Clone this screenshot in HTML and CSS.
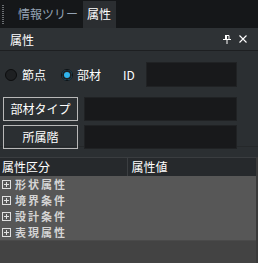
FILE: index.html
```html
<!DOCTYPE html>
<html lang="ja">
<head>
<meta charset="UTF-8">
<title>属性</title>
<link rel="stylesheet" href="styles.css">
</head>
<body>

<div class="tabs">
<div class="grip"></div>
<div class="tab">情報ツリー</div>
<div class="tab active">属性</div>
</div>

<div class="panel-head">
<span class="title">属性</span>
<span class="tools">
<svg width="8" height="9" viewBox="0 0 8 9"><path d="M2 0.5h4v4M2.5 0.5v4M0 4.5h8M4 5v4" stroke="#fff" stroke-width="1" fill="none"/><rect x="2" y="0" width="2" height="5" fill="#fff"/></svg>
<svg width="8" height="8" viewBox="0 0 8 8"><path d="M0.5 0.5l7 7M7.5 0.5l-7 7" stroke="#fff" stroke-width="1.1"/></svg>
</span>
</div>

<section class="body">
<div class="radio-row">
<label class="radio"><span class="dot"></span>節点</label>
<label class="radio on"><span class="dot"></span>部材</label>
<span class="id-label">ID</span>
<div class="box id-box"></div>
</div>

<div class="field-row">
<div class="btn">部材タイプ</div>
<div class="box"></div>
</div>
<div class="field-row">
<div class="btn">所属階</div>
<div class="box"></div>
</div>
</section>

<div class="grid">
<div class="grid-head">
<div class="col">属性区分</div>
<div class="col">属性値</div>
</div>
<div class="rows">
<div class="row"><span class="plus"></span>形状属性</div>
<div class="row"><span class="plus"></span>境界条件</div>
<div class="row"><span class="plus"></span>設計条件</div>
<div class="row"><span class="plus"></span>表現属性</div>
</div>
<div class="empty"></div>
</div>

</body>
</html>
```

FILE: styles.css
```css
body{margin:0;width:258px;height:263px;overflow:hidden;background:#2b2f32;color:#fff;font-family:"Noto Sans CJK JP","Noto Sans",sans-serif;font-size:12px;display:flex;flex-direction:column}
.tabs{height:28px;background:#151719;display:flex;align-items:stretch;padding-top:1px;box-sizing:border-box}
.grip{width:2px;margin:4px 12px 4px 2px;background:repeating-linear-gradient(#6a6e72 0 1px,transparent 1px 2px)}
.tab{padding:0 4px 0 2px;line-height:26px;color:#94a3b4;font-size:12px}
.tab.active{background:#2b2e31;color:#fff;padding:0 5px 0 4px;margin-left:1px}
.panel-head{height:22px;background:#2e3235;border-bottom:1px solid #1d1f21;display:flex;align-items:center;padding:0 11px 0 10px;justify-content:space-between}
.tools{display:flex;gap:8px;align-items:center}
.body{padding:11px 0 0 3px;height:96px;box-sizing:border-box;border-bottom:1px solid #25282a}
.radio-row{display:flex;align-items:center;height:25px;margin-bottom:10px;padding-left:2px}
.radio{display:flex;align-items:center;gap:5px;margin-right:15px}
.radio.on{gap:4px}
.dot{width:10px;height:10px;border-radius:50%;background:#1e2022;border:1px solid #0c0d0e;box-sizing:content-box}
.radio.on .dot{background:#2fb5ee;box-shadow:inset 0 0 0 2px #1e2022}
.id-label{margin-left:7px;width:23px}
.box{background:#18191b;height:24px;width:153px;border:1px solid #202224;box-sizing:border-box}
.id-box{width:91px;height:25px}
.field-row{display:flex;gap:6px;margin-bottom:4px}
.btn{width:75px;height:24px;border:1px solid #b8b8b8;box-sizing:border-box;text-align:center;line-height:22px}
.grid{flex:1;display:flex;flex-direction:column;margin-top:10px;border-right:2px solid #3a3a3a}
.grid-head{height:19px;background:#26292c;display:flex;border-top:1px solid #3a3d40;box-sizing:border-box}
.col{width:127px;line-height:18px;padding-left:2px;border-right:1px solid #3b3e41}
.col+.col{padding-left:4px;border-right:none}
.rows{background:#575757}
.row{height:16px;line-height:16px;display:flex;align-items:center;font-weight:700;font-size:11px;letter-spacing:2px;color:#d4d4d4;padding-left:2px;gap:4px}
.plus{width:9px;height:9px;flex:none;border:1px solid #e0e0e0;box-sizing:border-box;background:linear-gradient(#e0e0e0,#e0e0e0) center/5px 1px no-repeat,linear-gradient(#e0e0e0,#e0e0e0) center/1px 5px no-repeat}
.empty{flex:1;background:#434343;border-top:1px solid #4a4a4a}
```
